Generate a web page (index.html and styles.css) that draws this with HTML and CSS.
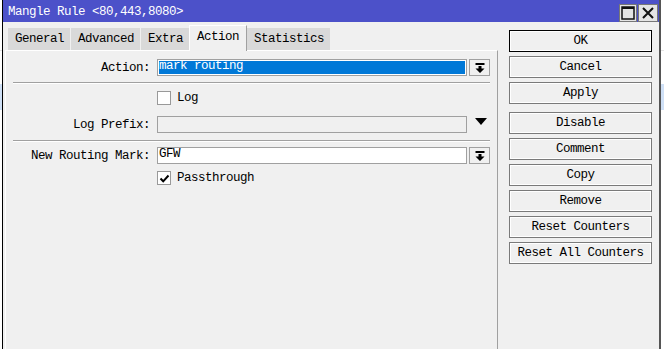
FILE: index.html
```html
<!DOCTYPE html>
<html lang="en">
<head>
    <meta charset="UTF-8">
    <meta name="viewport" content="width=device-width, initial-scale=1.0">
    <title>Mangle Rule</title>
    <link rel="stylesheet" href="styles.css">
</head>
<body>
    <div class="window">
        <div class="titlebar">
            <span class="title">Mangle Rule &lt;80,443,8080&gt;</span>
            <div class="controls">
                <span class="ctl">
                    <svg width="14" height="14" viewBox="0 0 14 14"><path d="M1 1h12v12H1z M1 1.5h12" fill="none" stroke="#111" stroke-width="1.5"/><rect x="1" y="1" width="12" height="2" fill="#111"/></svg>
                </span>
                <span class="ctl">
                    <svg width="14" height="14" viewBox="0 0 14 14"><path d="M2 2L12 12M12 2L2 12" stroke="#111" stroke-width="2"/></svg>
                </span>
            </div>
        </div>
        <div class="main">
            <div class="left">
                <div class="tabs">
                    <span class="tab">General</span>
                    <span class="tab">Advanced</span>
                    <span class="tab">Extra</span>
                    <span class="tab active">Action</span>
                    <span class="tab">Statistics</span>
                </div>
                <div class="panel">
                    <div class="row first">
                        <label class="lbl">Action:</label>
                        <div class="field selected">mark routing</div>
                        <span class="dd">
                            <svg width="10" height="10" viewBox="0 0 10 10"><path d="M0.5 0h9v2h-9z M3.5 3h3v2.5h3L5 10 0.5 5.5h3z" fill="#000"/></svg>
                        </span>
                    </div>
                    <div class="sep"></div>
                    <div class="row check-row log">
                        <span class="check"></span>
                        <span>Log</span>
                    </div>
                    <div class="row prefix">
                        <label class="lbl">Log Prefix:</label>
                        <div class="field disabled"></div>
                        <span class="tri"></span>
                    </div>
                    <div class="sep second"></div>
                    <div class="row mark">
                        <label class="lbl">New Routing Mark:</label>
                        <div class="field">GFW</div>
                        <span class="dd">
                            <svg width="10" height="10" viewBox="0 0 10 10"><path d="M0.5 0h9v2h-9z M3.5 3h3v2.5h3L5 10 0.5 5.5h3z" fill="#000"/></svg>
                        </span>
                    </div>
                    <div class="row check-row pass">
                        <span class="check">
                            <svg width="11" height="11" viewBox="0 0 11 11"><path d="M1.5 5.5L4.2 8.3 9.5 2.5" fill="none" stroke="#000" stroke-width="2"/></svg>
                        </span>
                        <span>Passthrough</span>
                    </div>
                </div>
            </div>
            <div class="buttons">
                <button class="btn default">OK</button>
                <button class="btn">Cancel</button>
                <button class="btn">Apply</button>
                <button class="btn group">Disable</button>
                <button class="btn">Comment</button>
                <button class="btn">Copy</button>
                <button class="btn">Remove</button>
                <button class="btn">Reset Counters</button>
                <button class="btn">Reset All Counters</button>
            </div>
        </div>
    </div>
</body>
</html>
```

FILE: styles.css
```css
html, body {
    margin: 0;
    height: 100%;
    overflow: hidden;
}
body {
    font-family: "Liberation Mono", "DejaVu Sans Mono", monospace;
    font-size: 12.5px;
    letter-spacing: -0.5px;
    color: #000;
    background: linear-gradient(to bottom, #fff 0, #fff 50px, #c8c8c8 50px, #fff 51px, #fff 84px, #cfe0f6 84px, #cfe0f6 110px, #fff 110px);
}
.window {
    margin-left: 2px;
    width: 656px;
    height: 349px;
    border-left: 1px solid #000;
    border-right: 2px solid #555;
    background: #f0f0f0;
    display: flex;
    flex-direction: column;
}
.titlebar {
    height: 22px;
    background: #4c51c9;
    color: #fff;
    display: flex;
    align-items: center;
    justify-content: space-between;
    padding: 0 1px 0 5px;
    flex-shrink: 0;
}
.title {
    padding-top: 1px;
}
.controls {
    display: flex;
    gap: 1px;
    align-self: flex-end;
}
.ctl {
    width: 18px;
    height: 18px;
    background: #e4e4e4;
    border: 1px solid #777;
    box-sizing: border-box;
    display: flex;
    align-items: center;
    justify-content: center;
}
.ctl + .ctl {
    width: 20px;
}
.main {
    display: flex;
    flex: 1;
    min-height: 0;
}
.left {
    margin-left: 2px;
    width: 493px;
    display: flex;
    flex-direction: column;
}
.tabs {
    height: 28px;
    display: flex;
    align-items: flex-end;
    padding-left: 3px;
    flex-shrink: 0;
}
.tab {
    height: 22px;
    line-height: 23px;
    padding: 0 6px 0 7px;
    margin-right: 1px;
    background: #d9d9d9;
    box-sizing: border-box;
}
.tab.active {
    position: relative;
    z-index: 1;
    height: 26px;
    line-height: 22px;
    margin-bottom: -1px;
    margin-right: 0;
    margin-left: -1px;
    padding: 0 7px 0 7px;
    background: #f0f0f0;
    border-top: 1px solid #fff;
    border-left: 1px solid #fff;
    border-right: 1px solid #a0a0a0;
}
.panel {
    flex: 1;
    border-top: 1px solid #fff;
    border-left: 1px solid #fff;
    border-right: 1px solid #a0a0a0;
    background: #f0f0f0;
}
.row {
    display: flex;
    align-items: center;
    height: 17px;
}
.row.first {
    margin-top: 8px;
}
.lbl {
    width: 144px;
    padding-right: 7px;
    text-align: right;
    flex-shrink: 0;
}
.field {
    width: 310px;
    height: 17px;
    box-sizing: border-box;
    border: 1px solid #a0a0a0;
    background: #fff;
    padding-left: 1px;
    line-height: 13px;
}
.field.selected {
    background: #0078d7;
    color: #fff;
    box-shadow: inset 0 0 0 1px #fff;
}
.field.disabled {
    background: #f0f0f0;
}
.dd {
    width: 21px;
    height: 17px;
    margin-left: 2px;
    box-sizing: border-box;
    border: 1px solid #a0a0a0;
    background: #f0f0f0;
    display: flex;
    align-items: center;
    justify-content: center;
}
.tri {
    margin-left: 8px;
    margin-top: -6px;
    width: 0;
    height: 0;
    border-left: 6px solid transparent;
    border-right: 6px solid transparent;
    border-top: 7px solid #000;
}
.sep {
    margin: 6px 0 0 7px;
    width: 477px;
    height: 1px;
    background: #a0a0a0;
    border-bottom: 1px solid #fff;
}
.sep.second {
    margin-top: 7px;
}
.check-row {
    padding-left: 151px;
    height: 14px;
    gap: 6px;
}
.log {
    margin-top: 7px;
}
.prefix {
    margin-top: 11px;
}
.mark {
    margin-top: 5px;
}
.pass {
    margin-top: 7px;
}
.check {
    width: 14px;
    height: 14px;
    box-sizing: border-box;
    border: 1px solid #999;
    background: #fff;
    display: flex;
    align-items: center;
    justify-content: center;
}
.buttons {
    margin: 8px 0 0 11px;
    width: 143px;
    display: flex;
    flex-direction: column;
    gap: 4px;
}
.btn {
    height: 22px;
    padding: 0;
    font: inherit;
    letter-spacing: inherit;
    color: #000;
    background: #f0f0f0;
    border: 1px solid #7a7a7a;
    box-shadow: inset 0 0 0 1px #fff;
}
.btn.default {
    border-color: #000;
}
.btn.group {
    margin-top: 4px;
}
```
